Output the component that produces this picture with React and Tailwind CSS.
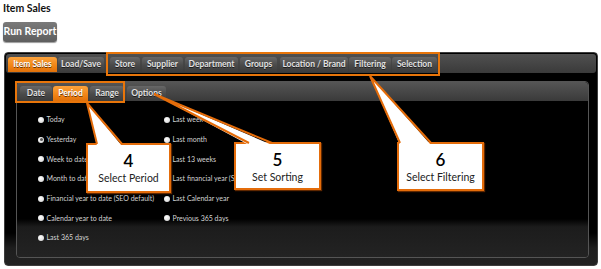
import React from 'react'

const font = { fontFamily: 'Lato, "Open Sans", sans-serif' }

const topTabs = [
  { label: 'Item Sales', cls: 'w-[49px]', active: true },
  { label: 'Load/Save', cls: 'w-[46px] ml-[1px]' },
  { label: 'Store', cls: 'w-[30px] ml-[6px]' },
  { label: 'Supplier', cls: 'w-[41px] ml-[2px]' },
  { label: 'Department', cls: 'w-[53px] ml-[2px]' },
  { label: 'Groups', cls: 'w-[37px] ml-[2px]' },
  { label: 'Location / Brand', cls: 'w-[68px] ml-[3px]' },
  { label: 'Filtering', cls: 'w-[42px] ml-[1px]' },
  { label: 'Selection', cls: 'w-[45px] ml-[1px]' },
]

const subTabs = [
  { label: 'Date', cls: 'w-[32px]' },
  { label: 'Period', cls: 'w-[35px] ml-[1px]', active: true },
  { label: 'Range', cls: 'w-[34px] ml-[2px]' },
  { label: 'Options', cls: 'w-[39px] ml-[3px]' },
]

const colA = ['Today', 'Yesterday', 'Week to date', 'Month to date', 'Financial year to date (SEO default)', 'Calendar year to date', 'Last 365 days']
const colB = ['Last week', 'Last month', 'Last 13 weeks', 'Last financial year (SEO default)', 'Last Calendar year', 'Previous 365 days']

function Tab({ label, cls, active }) {
  return (
    <div
      className={`${cls} h-[15px] rounded-t-[3px] flex items-center justify-center text-[8.5px] font-bold leading-none ${
        active
          ? 'bg-[linear-gradient(to_bottom,#fba23c,#f08414_60%,#e0700a)] text-white'
          : 'bg-[linear-gradient(to_bottom,#676767,#4a4a4a_55%,#3c3c3c)] text-[#e2e2e2]'
      } [text-shadow:0_1px_0_rgba(0,0,0,0.6)]`}
    >
      {label}
    </div>
  )
}

function Radio({ label, checked }) {
  return (
    <div className="h-[19.7px] flex items-center">
      <div className="w-[6px] h-[6px] shrink-0 rounded-full bg-[radial-gradient(circle_at_40%_35%,#ffffff,#cfcfcf)] flex items-center justify-center">
        {checked && <div className="w-[3px] h-[3px] rounded-full bg-[#5a5a5a]" />}
      </div>
      <span className="ml-[2.5px] text-[7px] text-[#d4d4d4] leading-none whitespace-nowrap">{label}</span>
    </div>
  )
}

function Callout({ cls, num, text }) {
  return (
    <div className={`absolute ${cls} bg-white border-2 border-[#e46c0a] shadow-[1px_1px_1px_rgba(120,50,0,0.8)] flex flex-col items-center pt-[6px]`}>
      <div className="text-[17px] leading-[19px] font-semibold text-black">{num}</div>
      <div className="text-[10.5px] leading-[14px] text-[#222] mt-[1px]">{text}</div>
    </div>
  )
}

export default function App() {
  return (
    <div className="relative w-[601px] h-[269px] bg-white overflow-hidden" style={font}>
      <div className="pl-[3px] pt-[2px] text-[10.5px] leading-[12px] font-bold text-[#111]">Item Sales</div>
      <div className="ml-[3px] mt-[8px] w-[54px] h-[20px] rounded-[3px] bg-[linear-gradient(to_bottom,#7a7a7a,#5e5e5e)] shadow-[0_1px_1px_rgba(0,0,0,0.4)] flex items-center justify-center text-white text-[10.5px] font-bold">
        Run Report
      </div>

      <div className="ml-[4px] mt-[10px] w-[594px] h-[214px] rounded-[4px] border border-[#3d3d3d] bg-[linear-gradient(to_bottom,#000_0,#000_180px,#1e1e1e_195px,#222_100%)] p-[1px]">
        <div className="h-[19px] rounded-[3px] bg-[linear-gradient(to_bottom,#505050,#3a3a3a)] flex items-start pl-[2px] pt-[3px]">
          {topTabs.map((t) => (
            <Tab key={t.label} {...t} />
          ))}
        </div>

        <div className="ml-[10px] mt-[8px] w-[573px] h-[177px] rounded-[4px] border border-[#555] overflow-hidden flex flex-col">
          <div className="h-[19px] shrink-0 rounded-tr-[3px] bg-[linear-gradient(to_bottom,#555,#3a3a3a)] flex items-start pl-[3px] pt-[4px]">
            {subTabs.map((t) => (
              <Tab key={t.label} {...t} />
            ))}
          </div>
          <div className="flex-1 flex pl-[21px] pt-[9px] bg-[linear-gradient(to_bottom,#000_0,#000_118px,#1c1c1c_126px,#232323_100%)]">
            <div className="w-[126px] flex flex-col">
              {colA.map((l) => (
                <Radio key={l} label={l} checked={l === 'Yesterday'} />
              ))}
            </div>
            <div className="flex flex-col">
              {colB.map((l) => (
                <Radio key={l} label={l} />
              ))}
            </div>
          </div>
        </div>
      </div>

      {/* annotation frames */}
      <div className="absolute left-[106px] top-[52px] w-[334px] h-[24px] border-2 border-[#e8750a]" />
      <div className="absolute left-[15px] top-[81px] w-[110px] h-[22px] border-2 border-[#e8750a]" />

      <Callout cls="left-[86px] top-[143px] w-[85px] h-[50px]" num="4" text="Select Period" />
      <Callout cls="left-[234px] top-[142px] w-[87px] h-[48px]" num="5" text="Set Sorting" />
      <Callout cls="left-[397px] top-[142px] w-[87px] h-[49px]" num="6" text="Select Filtering" />

      <svg className="absolute left-0 top-0 pointer-events-none" width="601" height="269">
        <polygon points="87,103 97,146 122,146" fill="#fff" />
        <polyline points="97,144 87,103 122,144" fill="none" stroke="#e46c0a" strokeWidth="2" strokeLinejoin="miter" />
        <polygon points="154,94 249,145 272,145" fill="#fff" />
        <polyline points="249,143 154,94 272,143" fill="none" stroke="#e46c0a" strokeWidth="2" />
        <polygon points="370,76 400,145 431,145" fill="#fff" />
        <polyline points="400,143 370,76 431,143" fill="none" stroke="#e46c0a" strokeWidth="2" />
      </svg>
    </div>
  )
}
